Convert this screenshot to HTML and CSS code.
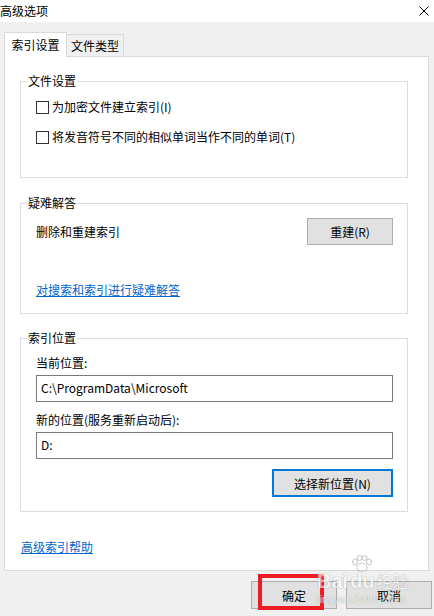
FILE: index.html
```html
<!DOCTYPE html>
<html lang="zh-CN">
<head>
    <meta charset="UTF-8">
    <meta name="viewport" content="width=device-width, initial-scale=1.0">
    <title>高级选项</title>
    <link rel="stylesheet" href="styles.css">
</head>
<body>
    <div class="titlebar">
        <span class="title">高级选项</span>
        <svg class="close" width="10" height="10" viewBox="0 0 10 10">
            <path d="M0.5 0.5 L9.5 9.5 M9.5 0.5 L0.5 9.5" stroke="#000" stroke-width="1" fill="none"/>
        </svg>
    </div>

    <div class="tabs">
        <div class="tab active">索引设置</div>
        <div class="tab">文件类型</div>
    </div>

    <div class="panel">
        <fieldset class="group first">
            <legend>文件设置</legend>
            <label class="check-row"><input type="checkbox">为加密文件建立索引(I)</label>
            <label class="check-row"><input type="checkbox">将发音符号不同的相似单词当作不同的单词(T)</label>
        </fieldset>

        <fieldset class="group second">
            <legend>疑难解答</legend>
            <div class="rebuild-row">
                <span>删除和重建索引</span>
                <button class="btn rebuild">重建(R)</button>
            </div>
            <a class="link trouble" href="#">对搜索和索引进行疑难解答</a>
        </fieldset>

        <fieldset class="group third">
            <legend>索引位置</legend>
            <div class="field-label">当前位置:</div>
            <div class="field">C:\ProgramData\Microsoft</div>
            <div class="field-label next">新的位置(服务重新启动后):</div>
            <div class="field">D:</div>
            <div class="pick-row">
                <button class="btn pick">选择新位置(N)</button>
            </div>
        </fieldset>

        <a class="link help" href="#">高级索引帮助</a>
    </div>

    <div class="actions">
        <button class="btn dialog ok">确定</button>
        <button class="btn dialog">取消</button>
    </div>

    <!-- 百度经验水印 -->
    <div class="watermark">
        <div class="wm-top">
            <span class="wm-bai">Bai</span>
            <span class="wm-du">du
                <svg class="wm-paw" width="22" height="17" viewBox="0 0 22 17">
                    <ellipse cx="4" cy="7" rx="2.5" ry="3" />
                    <ellipse cx="8.5" cy="3" rx="2.5" ry="2.5" />
                    <ellipse cx="13.5" cy="3" rx="2.5" ry="2.5" />
                    <ellipse cx="18" cy="7" rx="2.5" ry="3" />
                    <path d="M11 8 C7 8 5.5 12 6 14.5 C7 16.5 15 16.5 16 14.5 C16.5 12 15 8 11 8 Z" />
                </svg>
            </span>
            <span class="wm-jy">经验</span>
        </div>
        <div class="wm-url">jingyan.baidu.com</div>
    </div>
</body>
</html>
```

FILE: styles.css
```css
body {
    margin: 0;
    width: 434px;
    height: 616px;
    overflow: hidden;
    background: #f0f0f0;
    font-family: "Noto Sans CJK SC", "Noto Sans", sans-serif;
    font-size: 12px;
    line-height: 16px;
    color: #000;
    position: relative;
}

/* 标题栏 */
.titlebar {
    height: 22px;
    background: #fff;
    display: flex;
    align-items: center;
    justify-content: space-between;
    padding-right: 5px;
}

.title {
    margin-top: -1px;
}

/* 选项卡 */
.tabs {
    display: flex;
    align-items: flex-end;
    height: 25px;
    margin-top: 10px;
    padding-left: 4px;
}

.tab {
    box-sizing: border-box;
    width: 57px;
    height: 22px;
    margin-bottom: 1px;
    border: 1px solid #d9d9d9;
    border-left: none;
    border-bottom: none;
    background: #f0f0f0;
    display: flex;
    align-items: center;
    justify-content: center;
}

.tab.active {
    width: 63px;
    height: 25px;
    margin-bottom: 0;
    border-left: 1px solid #d9d9d9;
    background: #fff;
    position: relative;
    z-index: 1;
}

.panel {
    box-sizing: border-box;
    height: 515px;
    margin: -1px 5px 0 4px;
    padding: 0 20px 0 15px;
    border: 1px solid #d9d9d9;
    background: #fff;
}

/* 分组框 */
.group {
    margin: 16px 0 0;
    padding: 0 14px 0 15px;
    border: 1px solid #dcdcdc;
    min-width: 0;
}

.group legend {
    margin-left: -9px;
    padding: 0 1px;
    line-height: 16px;
}

.group.first {
    padding-bottom: 30px;
}

.group.second {
    margin-top: 17px;
    padding-bottom: 15px;
}

.group.third {
    padding-bottom: 14px;
}

.check-row {
    display: flex;
    align-items: center;
    height: 20px;
    margin-top: 10px;
    gap: 3px;
}

.group.first .check-row:first-of-type {
    margin-top: 8px;
}

.check-row input {
    appearance: none;
    box-sizing: border-box;
    width: 13px;
    height: 13px;
    margin: 0;
    border: 1px solid #333;
    background: #fff;
}

.rebuild-row {
    display: flex;
    align-items: center;
    justify-content: space-between;
    margin-top: 7px;
}

.link {
    display: block;
    width: fit-content;
    color: #0066cc;
    text-decoration: underline;
}

.trouble {
    margin-top: 37px;
}

.help {
    margin-top: 27px;
    margin-left: 1px;
}

.field-label {
    margin-top: 9px;
}

.field-label.next {
    margin-top: 10px;
}

.field {
    box-sizing: border-box;
    height: 27px;
    margin-top: 4px;
    padding: 4px 4px 0;
    border: 1px solid #7a7a7a;
    background: #fff;
}

.pick-row {
    display: flex;
    justify-content: flex-end;
    margin-top: 10px;
}

/* 按钮 */
.btn {
    box-sizing: border-box;
    padding: 0;
    background: #e1e1e1;
    border: 1px solid #adadad;
    font-family: inherit;
    font-size: 12px;
    color: #000;
}

.rebuild {
    width: 86px;
    height: 27px;
}

.pick {
    width: 121px;
    height: 28px;
    border: 2px solid #0078d7;
}

.actions {
    display: flex;
    justify-content: flex-end;
    gap: 9px;
    margin-top: 10px;
    padding-right: 2px;
}

.dialog {
    width: 86px;
    height: 28px;
}

/* 红色标注框 */
.ok {
    position: relative;
}

.ok::after {
    content: "";
    position: absolute;
    left: 6px;
    top: -8px;
    width: 66px;
    height: 36px;
    box-sizing: border-box;
    border: 4px solid #ed1c24;
}

/* 水印 */
.watermark {
    position: absolute;
    left: 317px;
    top: 558px;
    opacity: 0.6;
    pointer-events: none;
    color: #fff;
    text-shadow: 0 0 1px #8a8a8a, 0 0 1px #8a8a8a;
}

.wm-top {
    display: flex;
    align-items: flex-end;
    height: 33px;
}

.wm-bai, .wm-du {
    font-family: "Liberation Sans", sans-serif;
    font-weight: bold;
    font-size: 20px;
    line-height: 20px;
}

.wm-du {
    position: relative;
    margin-left: 2px;
}

.wm-paw {
    position: absolute;
    left: 1px;
    top: -16px;
    fill: #fff;
    stroke: #a0a0a0;
    stroke-width: 1;
}

.wm-jy {
    font-size: 16px;
    line-height: 20px;
    margin-left: 2px;
}

.wm-url {
    font-family: "Liberation Sans", sans-serif;
    font-size: 11px;
    line-height: 12px;
    margin-top: 2px;
}
```
